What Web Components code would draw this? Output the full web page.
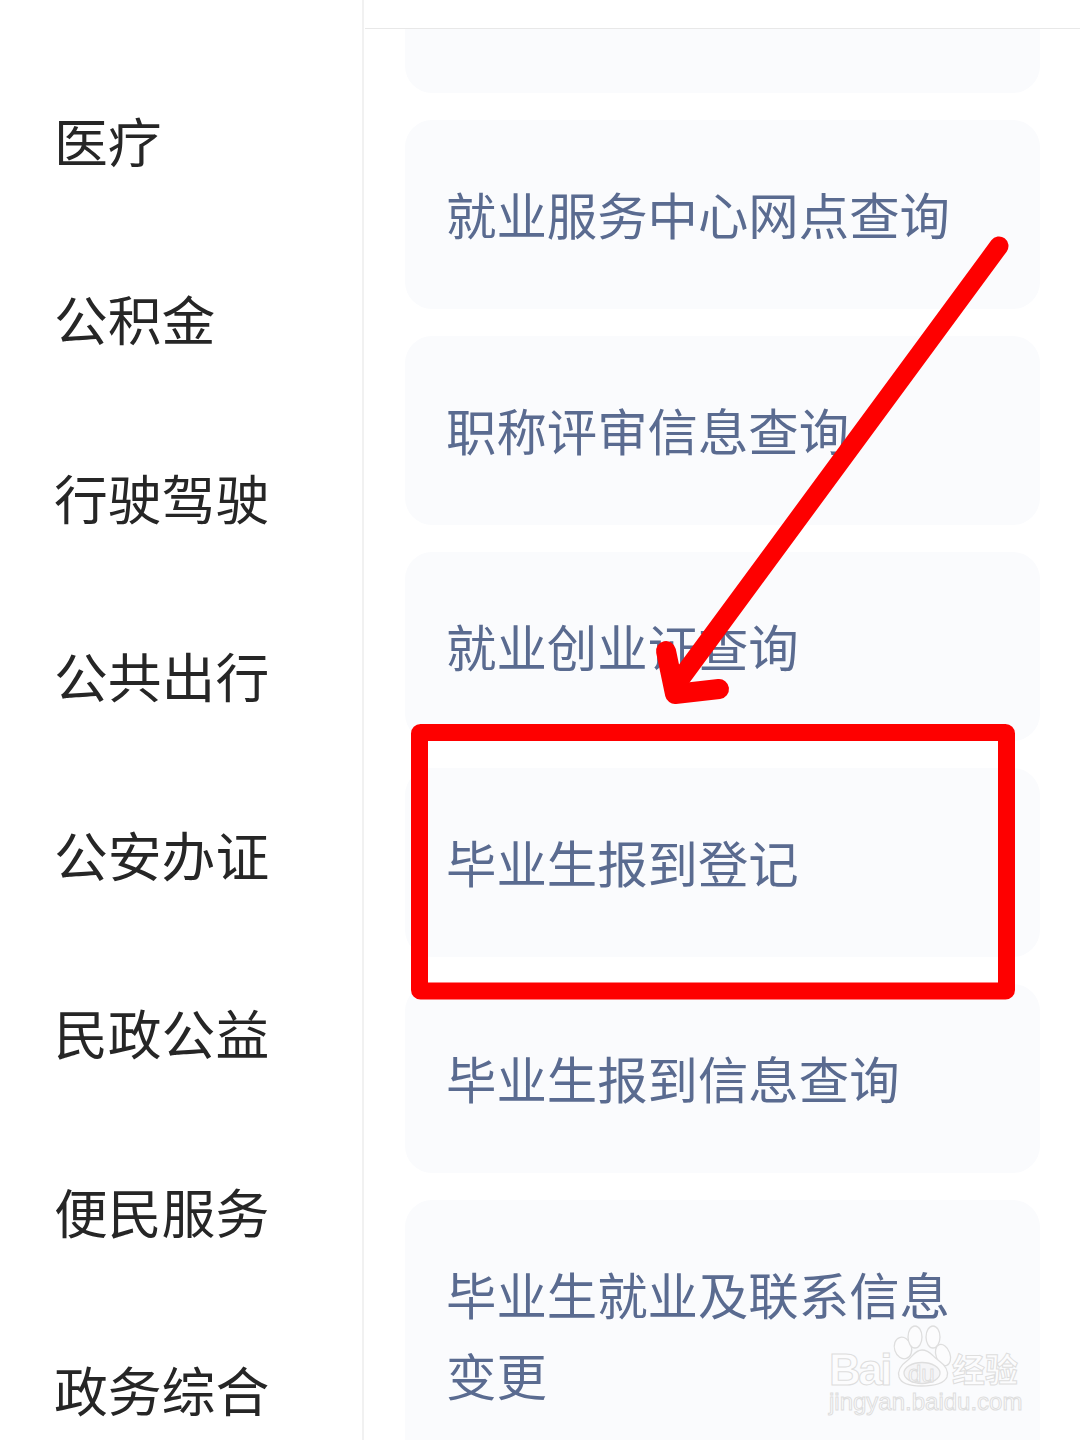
<!DOCTYPE html>
<html lang="zh">
<head>
<meta charset="utf-8">
<title>服务列表</title>
<style>
  html, body { margin: 0; height: 100%; background: #fff; }
  body { font-family: "Noto Sans CJK SC", "Noto Sans", sans-serif; overflow: hidden; }
</style>
</head>
<body>
<service-page>
  <side-menu slot="side">
    <menu-row>医疗</menu-row>
    <menu-row>公积金</menu-row>
    <menu-row>行驶驾驶</menu-row>
    <menu-row>公共出行</menu-row>
    <menu-row>公安办证</menu-row>
    <menu-row>民政公益</menu-row>
    <menu-row>便民服务</menu-row>
    <menu-row>政务综合</menu-row>
  </side-menu>
  <service-list slot="main">
    <service-card></service-card>
    <service-card><div>就业服务中心网点查询</div></service-card>
    <service-card><div>职称评审信息查询</div></service-card>
    <service-card><div>就业创业证查询</div></service-card>
    <service-card><div>毕业生报到登记</div></service-card>
    <service-card><div>毕业生报到信息查询</div></service-card>
    <service-card><div>毕业生就业及联系信息</div><div>变更</div></service-card>
  </service-list>
  <mark-up slot="over"></mark-up>
  <baidu-mark slot="over"></baidu-mark>
</service-page>

<script>
class ServicePage extends HTMLElement {
  constructor() {
    super();
    this.shadowDOM = this.attachShadow({ mode: 'open' });
    this.shadowDOM.innerHTML = `
    <style>
      :host { display: flex; position: relative; width: 1080px; height: 1440px; overflow: hidden; }
      .side { flex: 0 0 362px; border-right: 2px solid #f1f1f1; }
      .main { flex: 1; min-width: 0; display: flex; flex-direction: column; }
      .top { flex: 0 0 28px; border-bottom: 1px solid #e8e8e8; margin-left: 1px; }
      .body { flex: 1; min-height: 0; overflow: hidden; }
    </style>
    <div class="side"><slot name="side"></slot></div>
    <div class="main">
      <div class="top"></div>
      <div class="body"><slot name="main"></slot></div>
    </div>
    <slot name="over"></slot>
    `;
  }
}

class SideMenu extends HTMLElement {
  constructor() {
    super();
    this.shadowDOM = this.attachShadow({ mode: 'open' });
    this.shadowDOM.innerHTML = `
    <style>
      :host { display: block; padding: 50px 0 0 54px; }
    </style>
    <slot></slot>
    `;
  }
}

class MenuRow extends HTMLElement {
  constructor() {
    super();
    this.shadowDOM = this.attachShadow({ mode: 'open' });
    this.shadowDOM.innerHTML = `
    <style>
      :host {
        display: flex;
        align-items: center;
        height: 178.5px;
        font-size: 53.8px;
        color: #262626;
        white-space: nowrap;
      }
    </style>
    <slot></slot>
    `;
  }
}

class ServiceList extends HTMLElement {
  constructor() {
    super();
    this.shadowDOM = this.attachShadow({ mode: 'open' });
    this.shadowDOM.innerHTML = `
    <style>
      :host {
        display: flex;
        flex-direction: column;
        gap: 27px;
        margin: -125px 40px 0 41px;
      }
    </style>
    <slot></slot>
    `;
  }
}

class ServiceCard extends HTMLElement {
  constructor() {
    super();
    this.shadowDOM = this.attachShadow({ mode: 'open' });
    this.shadowDOM.innerHTML = `
    <style>
      :host {
        display: flex;
        flex-direction: column;
        align-items: flex-start;
        justify-content: center;
        box-sizing: border-box;
        min-height: 189px;
        padding: 53px 80px 55px 41px;
        background: #fafbfd;
        border-radius: 27px;
        font-size: 50.4px;
        line-height: 81px;
        color: #5a6b90;
      }
    </style>
    <slot></slot>
    `;
  }
}

class MarkUp extends HTMLElement {
  constructor() {
    super();
    this.shadowDOM = this.attachShadow({ mode: 'open' });
    this.shadowDOM.innerHTML = `
    <style>
      :host { position: absolute; inset: 0; display: block; pointer-events: none; }
      svg { display: block; }
    </style>
    <svg width="1080" height="1440" viewBox="0 0 1080 1440" fill="none" stroke="#fe0000" stroke-linecap="round" stroke-linejoin="round">
      <rect x="419.5" y="732.5" width="587" height="258.5" rx="1" stroke-width="17"/>
      <path d="M999 246 L681 678" stroke-width="19"/>
      <path d="M666 651 L675 694 L719 689" stroke-width="20"/>
    </svg>
    `;
  }
}

class BaiduMark extends HTMLElement {
  constructor() {
    super();
    this.shadowDOM = this.attachShadow({ mode: 'open' });
    this.shadowDOM.innerHTML = `
    <style>
      :host {
        position: absolute;
        left: 829px;
        top: 1325px;
        width: 200px;
        height: 92px;
        display: block;
        color: #fcfcfd;
        -webkit-text-stroke: 1px #dedede;
        font-family: "Liberation Sans", sans-serif;
      }
      .logo { display: flex; align-items: flex-end; height: 62px; }
      .latin { flex: 0 0 65px; font-size: 44px; font-weight: 700; line-height: 34px; letter-spacing: -2.5px; white-space: nowrap; }
      .paw { flex: 0 0 58px; }
      .cn { font-family: "Noto Sans CJK SC", sans-serif; font-size: 33px; font-weight: 700; line-height: 38px; white-space: nowrap; }
      .url { font-size: 24px; line-height: 28px; white-space: nowrap; margin-top: 1px; }
      svg { display: block; overflow: visible; }
      svg text { font-family: "Liberation Sans", sans-serif; font-size: 24px; }
    </style>
    <div class="logo">
      <span class="latin">Bai</span>
      <svg class="paw" width="58" height="62" viewBox="0 0 58 62" fill="#fcfcfd" stroke="#dedede" stroke-width="1.3">
        <ellipse cx="9" cy="23" rx="8.5" ry="11" transform="rotate(-18 9 23)"/>
        <ellipse cx="21" cy="12" rx="7" ry="11"/>
        <ellipse cx="39" cy="12" rx="7" ry="11"/>
        <ellipse cx="49" cy="30" rx="7" ry="11" transform="rotate(-20 49 30)"/>
        <path d="M28 25c-7 0-9 6-14 10-7 5-11 10-9 17 2 6 10 9 22 9 13 0 23-2 26-9 2-6-2-12-9-17-6-4-8-10-16-10z"/>
        <ellipse cx="28" cy="48" rx="18" ry="10.5" fill="#f5f5f7"/>
        <text x="14" y="57" stroke-width="1">du</text>
      </svg>
      <span class="cn">经验</span>
    </div>
    <div class="url">jingyan.baidu.com</div>
    `;
  }
}

customElements.define('service-page', ServicePage);
customElements.define('side-menu', SideMenu);
customElements.define('menu-row', MenuRow);
customElements.define('service-list', ServiceList);
customElements.define('service-card', ServiceCard);
customElements.define('mark-up', MarkUp);
customElements.define('baidu-mark', BaiduMark);
</script>
</body>
</html>
